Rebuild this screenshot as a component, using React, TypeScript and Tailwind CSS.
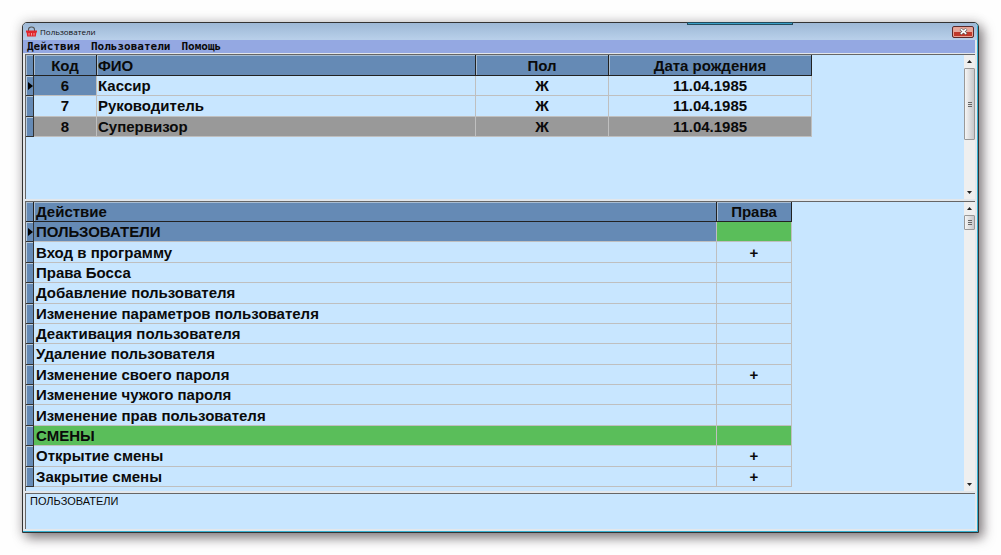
import { clsx } from "clsx";

const menu = ["Действия", "Пользователи", "Помощь"];

const users = [
  { code: 6, name: "Кассир", sex: "Ж", born: "11.04.1985" },
  { code: 7, name: "Руководитель", sex: "Ж", born: "11.04.1985" },
  { code: 8, name: "Супервизор", sex: "Ж", born: "11.04.1985", disabled: true },
];

const actions = [
  { name: "ПОЛЬЗОВАТЕЛИ", group: true },
  { name: "Вход в программу", allowed: true },
  { name: "Права Босса" },
  { name: "Добавление пользователя" },
  { name: "Изменение параметров пользователя" },
  { name: "Деактивация пользователя" },
  { name: "Удаление пользователя" },
  { name: "Изменение своего пароля", allowed: true },
  { name: "Изменение чужого пароля" },
  { name: "Изменение прав пользователя" },
  { name: "СМЕНЫ", group: true },
  { name: "Открытие смены", allowed: true },
  { name: "Закрытие смены", allowed: true },
];

const headCell =
  "bg-[#658ab5] border-r border-b border-[#222] p-0 font-bold shadow-[inset_1px_1px_0_#a9bdd2]";
const bodyCell = "border-r border-b border-[#bfbfbf] p-0";

// Left service column: marks the current row with a triangle
function RowMark({ current }: { current?: boolean }) {
  return (
    <td className="bg-[#658ab5] border-r border-b border-[#333] p-0 shadow-[inset_1px_1px_0_#b9cbdc]">
      {current && (
        <svg className="ml-[2px] h-[8px] w-[5px]" viewBox="0 0 5 8">
          <path d="M0 0L5 4L0 8Z" fill="#000" />
        </svg>
      )}
    </td>
  );
}

function ScrollBar({ thumb }: { thumb: string }) {
  return (
    <div className="flex w-[11px] shrink-0 flex-col bg-[#efefef]">
      <button aria-label="Вверх" className="flex h-[13px] items-center justify-center">
        <svg className="h-[3px] w-[5px]" viewBox="0 0 5 3">
          <path d="M0 3L2.5 0L5 3Z" fill="#222" />
        </svg>
      </button>
      <div
        className={clsx(
          "flex flex-col items-center justify-center gap-px rounded-[1px] border border-[#999] bg-linear-to-r from-[#f5f5f5] to-[#c8c8cb]",
          thumb
        )}
      >
        <span className="h-px w-1 bg-[#666]" />
        <span className="h-px w-1 bg-[#666]" />
        <span className="h-px w-1 bg-[#666]" />
      </div>
      <button aria-label="Вниз" className="mt-auto flex h-[13px] items-center justify-center">
        <svg className="h-[3px] w-[5px]" viewBox="0 0 5 3">
          <path d="M0 0L2.5 3L5 0Z" fill="#222" />
        </svg>
      </button>
    </div>
  );
}

function TitleBar() {
  return (
    <header className="flex h-[17px] shrink-0 items-center bg-linear-to-b from-[#9db8d6] to-[#b9d0ea] pr-[3px] pl-[3px]">
      <svg className="h-[11px] w-[11px]" viewBox="0 0 11 11">
        <path d="M2.5 5V3.5Q2.5 1 5.5 1T8.5 3.5V5" fill="none" stroke="#555" strokeWidth="1.1" />
        <path d="M0 4.5H11V6.5H10.3L9.8 10.5H1.2L0.7 6.5H0Z" fill="#e0262c" />
        <path d="M3 7V9.5M5.5 7V9.5M8 7V9.5" stroke="#f7b5b5" strokeWidth="0.8" />
      </svg>
      <h1 className="ml-[3px] font-['Open_Sans',sans-serif] text-[8px] leading-3 text-[#111]">
        Пользователи
      </h1>
      <button
        aria-label="Закрыть"
        className="ml-auto flex h-3 w-[22px] items-center justify-center rounded-[2px] border border-[#5a2a2a] bg-linear-to-b from-[#e6a79b] from-45% to-[#c0392b] to-55% shadow-[inset_0_0_0_1px_#e9a294]"
      >
        <svg className="h-[7px] w-[9px]" viewBox="0 0 9 7">
          <path d="M1.5 1L7.5 6M7.5 1L1.5 6" stroke="#555" strokeWidth="2.8" />
          <path d="M1.8 1.2L7.2 5.8M7.2 1.2L1.8 5.8" stroke="#fff" strokeWidth="1.6" />
        </svg>
      </button>
    </header>
  );
}

export default function App() {
  return (
    <div className="flex min-h-screen bg-[#fefefe] p-[22px] font-['Liberation_Sans',Arial,sans-serif] text-[15px] leading-[19px] text-[#0a0a0a]">
      <main className="relative flex flex-1 flex-col rounded-t-[5px] border border-[#333] bg-[#e3e7eb] shadow-[4px_5px_12px_0px_rgba(60,50,55,0.6),0_0_12px_2px_rgba(0,0,0,0.12)]">
        <div className="flex flex-1 flex-col overflow-hidden rounded-t-[4px] border-r border-b border-[#35b0d0]">
          <TitleBar />
          <nav className="mr-[2px] mb-px flex h-[13px] shrink-0 items-center gap-[11px] bg-[#94a8e2] pl-1 font-['DejaVu_Sans_Mono',monospace] text-[11px] leading-3 font-bold">
            {menu.map((item) => (
              <button key={item}>{item}</button>
            ))}
          </nav>

          {/* Список пользователей */}
          <section className="mr-[2px] ml-[2px] flex h-[145px] shrink-0 border-t border-l border-[#666] bg-[#c8e6ff]">
            <div className="flex-1">
              <table className="h-[82px] w-[786px] table-fixed border-separate border-spacing-0 font-bold">
                <colgroup>
                  <col className="w-[8px]" />
                  <col className="w-[63px]" />
                  <col className="w-[379px]" />
                  <col className="w-[133px]" />
                  <col className="w-[203px]" />
                </colgroup>
                <thead>
                  <tr className="h-[21px]">
                    <th className={headCell} />
                    <th className={headCell}>Код</th>
                    <th className={clsx(headCell, "pl-px text-left")}>ФИО</th>
                    <th className={headCell}>Пол</th>
                    <th className={headCell}>Дата рождения</th>
                  </tr>
                </thead>
                <tbody>
                  {users.map((u, i) => (
                    <tr key={u.code} className={clsx(u.disabled && "bg-[#999]")}>
                      <RowMark current={i === 0} />
                      <td className={clsx(bodyCell, "text-center", i === 0 && "bg-[#658ab5]")}>{u.code}</td>
                      <td className={clsx(bodyCell, "pl-px")}>{u.name}</td>
                      <td className={clsx(bodyCell, "text-center")}>{u.sex}</td>
                      <td className={clsx(bodyCell, "text-center")}>{u.born}</td>
                    </tr>
                  ))}
                </tbody>
              </table>
            </div>
            <ScrollBar thumb="h-[72px]" />
          </section>

          {/* Права выбранного пользователя */}
          <section className="mt-[2px] mr-[2px] ml-[2px] flex flex-1 border-t border-l border-[#666] bg-[#c8e6ff]">
            <div className="flex-1">
              <table className="h-[285px] w-[766px] table-fixed border-separate border-spacing-0 font-bold">
                <colgroup>
                  <col className="w-[8px]" />
                  <col className="w-[683px]" />
                  <col className="w-[75px]" />
                </colgroup>
                <thead>
                  <tr>
                    <th className={headCell} />
                    <th className={clsx(headCell, "pl-[2px] text-left")}>Действие</th>
                    <th className={headCell}>Права</th>
                  </tr>
                </thead>
                <tbody>
                  {actions.map((a, i) => (
                    <tr key={a.name} className={clsx(a.group && "bg-[#5abe5a]")}>
                      <RowMark current={i === 0} />
                      <td className={clsx(bodyCell, "pl-[2px]", i === 0 && "bg-[#658ab5]")}>{a.name}</td>
                      <td className={clsx(bodyCell, "text-center")}>{a.allowed && "+"}</td>
                    </tr>
                  ))}
                </tbody>
              </table>
            </div>
            <ScrollBar thumb="h-[15px]" />
          </section>

          <footer className="mt-[2px] mr-[2px] mb-[2px] ml-[2px] h-9 shrink-0 border-t border-l border-[#666] bg-[#c8e6ff] pl-1 text-[11px] leading-[14px]">
            ПОЛЬЗОВАТЕЛИ
          </footer>
        </div>

        {/* Край окна, выглядывающего из-за рамки */}
        <div className="absolute -top-px right-[185px] h-[3px] w-[106px] border border-[#234a5c] bg-[#3aa0c8]" />
      </main>
    </div>
  );
}
